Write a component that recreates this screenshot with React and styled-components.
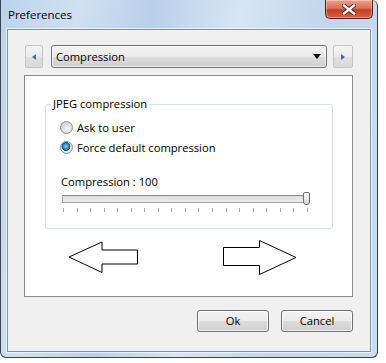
import React from "react";
import styled, { createGlobalStyle } from "styled-components";

const Global = createGlobalStyle`
  html, body { margin: 0; padding: 0; background: #ffffff; }
  body { font-family: "Open Sans", "Noto Sans", sans-serif; font-size: 11.2px; color: #000; }
  * { box-sizing: border-box; }
`;

const Window = styled.div`
  width: 378px;
  height: 358px;
  display: flex;
  flex-direction: column;
  border: 1px solid #3c4452;
  border-top: none;
  border-radius: 0 6px 6px 6px;
  background: linear-gradient(100deg, #bcd3eb 0%, #cfe0f2 18%, #b9d0e9 35%, #d6e5f5 55%, #c1d6ec 75%, #cadcef 100%);
  overflow: hidden;
`;

const TitleBar = styled.div`
  height: 29px;
  flex: none;
  display: flex;
  align-items: flex-start;
  justify-content: space-between;
  padding-left: 7px;
  padding-right: 4px;
`;

const Title = styled.div`
  margin-top: 7px;
  font-size: 11.5px;
  color: #000;
`;

const CloseButton = styled.div`
  width: 48px;
  height: 19px;
  display: flex;
  align-items: center;
  justify-content: center;
  border: 1px solid #5c1d14;
  border-top: none;
  border-radius: 0 0 5px 5px;
  background: linear-gradient(180deg, #eaa08c 0%, #d8725a 45%, #c63d24 55%, #d5633f 100%);
  box-shadow: inset 0 0 0 1px rgba(255,255,255,0.35);
`;

const Client = styled.div`
  flex: 1;
  margin: 0 6px 5px 6px;
  border: 1px solid #7f93ab;
  background: #f0f0f0;
  display: flex;
  flex-direction: column;
  padding: 15px 17px 18px 16px;
  box-shadow: 0 0 0 1px rgba(255,255,255,0.6);
`;

const NavRow = styled.div`
  display: flex;
  align-items: center;
  height: 23px;
  padding-left: 1px;
`;

const NavButton = styled.div`
  width: ${p => p.$w}px;
  height: 23px;
  display: flex;
  align-items: center;
  justify-content: center;
  border: 1px solid #c4c4c4;
  border-radius: 2px;
  background: linear-gradient(180deg, #f4f4f4 0%, #ebebeb 50%, #e0e0e0 51%, #d9d9d9 100%);
  margin-left: ${p => p.$ml || 0}px;
`;

const Combo = styled.div`
  width: 277px;
  height: 23px;
  margin-left: 8px;
  display: flex;
  align-items: center;
  justify-content: space-between;
  padding: 0 5px 0 4px;
  border: 1px solid #707070;
  border-radius: 3px;
  background: linear-gradient(180deg, #f2f2f2 0%, #ebebeb 50%, #dddddd 51%, #cfcfcf 100%);
  box-shadow: inset 0 0 0 1px rgba(255,255,255,0.7);
`;

const Panel = styled.div`
  margin-top: 7px;
  height: 222px;
  background: #ffffff;
  border: 1px solid #8c8c8c;
  display: flex;
  flex-direction: column;
  padding: 20px 19px 0 20px;
`;

const Group = styled.fieldset`
  margin: 0;
  border: 1px solid #d5dfe5;
  border-radius: 3px;
  padding: 5px 22px 16px 14px;
  display: flex;
  flex-direction: column;
`;

const Legend = styled.legend`
  margin-left: -9px;
  padding: 0 2px;
  line-height: 16px;
`;

const RadioRow = styled.label`
  display: flex;
  align-items: center;
  height: 18px;
  margin-top: ${p => p.$mt || 0}px;
  gap: 4px;
`;

const Radio = styled.input.attrs({ type: "radio" })`
  appearance: none;
  margin: 0;
  width: 13px;
  height: 13px;
  border-radius: 50%;
  border: 1px solid #8e8f8f;
  background: radial-gradient(circle at 60% 65%, #f4f4f4 0%, #d4d4d4 70%, #c6c6c6 100%);
  &:checked {
    background:
      radial-gradient(circle at 45% 40%, #8fd0f5 0%, #2a8bd0 30%, #0d4f8c 48%, transparent 52%),
      radial-gradient(circle, #f4f4f4 0%, #e0e0e0 100%);
  }
`;

const ValueLabel = styled.div`
  margin-top: 18px;
  line-height: 16px;
  padding-left: 1px;
`;

const Slider = styled.div`
  position: relative;
  margin-top: 5px;
  padding-left: 2px;
`;

const Track = styled.div`
  height: 8px;
  border: 1px solid #a6a6a6;
  border-top-color: #8a8a8a;
  background: linear-gradient(180deg, #dcdcdc 0%, #ececec 100%);
  border-radius: 1px;
`;

const Thumb = styled.div`
  position: absolute;
  right: 0;
  top: -3px;
  width: 7px;
  height: 13px;
  border: 1px solid #6f6f6f;
  border-radius: 2px 2px 3px 3px;
  background: linear-gradient(180deg, #fbfbfb 0%, #e6e6e6 60%, #d2d2d2 100%);
`;

const Ticks = styled.div`
  display: flex;
  justify-content: space-between;
  margin-top: 5px;
  padding: 0 2px 0 3px;
`;

const Tick = styled.span`
  width: 1px;
  height: 4px;
  background: #a8a8a8;
`;

const ArrowRow = styled.div`
  display: flex;
  align-items: flex-start;
  margin-top: 11px;
  padding-left: 23px;
  gap: 84px;
`;

const ButtonRow = styled.div`
  display: flex;
  justify-content: flex-end;
  gap: 12px;
  margin-top: 13px;
`;

const Button = styled.button`
  width: 72px;
  height: 22px;
  font-family: inherit;
  font-size: 11.2px;
  color: #000;
  border: 1px solid #707070;
  border-radius: 3px;
  background: linear-gradient(180deg, #f2f2f2 0%, #ebebeb 50%, #dddddd 51%, #cfcfcf 100%);
  box-shadow: inset 0 0 0 1px rgba(255,255,255,0.75);
  padding: 0;
  line-height: 18px;
`;

export default function App() {
  return (
    <>
      <Global />
      <Window>
        <TitleBar>
          <Title>Preferences</Title>
          <CloseButton>
            <svg width="14" height="11" viewBox="0 0 14 11">
              <path d="M2 1.5 L12 9.5 M12 1.5 L2 9.5" stroke="#3a1a14" strokeWidth="4" strokeLinecap="square" />
              <path d="M2 1.5 L12 9.5 M12 1.5 L2 9.5" stroke="#ffffff" strokeWidth="2.4" strokeLinecap="square" />
            </svg>
          </CloseButton>
        </TitleBar>
        <Client>
          <NavRow>
            <NavButton $w={18}>
              <svg width="4" height="6" viewBox="0 0 4 6"><path d="M4 0 L0 3 L4 6 Z" fill="#5a6b8c" /></svg>
            </NavButton>
            <Combo>
              <span>Compression</span>
              <svg width="8" height="5" viewBox="0 0 8 5"><path d="M0 0 H8 L4 5 Z" fill="#000" /></svg>
            </Combo>
            <NavButton $w={20} $ml={6}>
              <svg width="4" height="6" viewBox="0 0 4 6"><path d="M0 0 L4 3 L0 6 Z" fill="#4a63b0" /></svg>
            </NavButton>
          </NavRow>
          <Panel>
            <Group>
              <Legend>JPEG compression</Legend>
              <RadioRow $mt={1}>
                <Radio name="c" />
                <span>Ask to user</span>
              </RadioRow>
              <RadioRow $mt={2}>
                <Radio name="c" defaultChecked />
                <span>Force default compression</span>
              </RadioRow>
              <ValueLabel>Compression : 100</ValueLabel>
              <Slider>
                <Track />
                <Thumb />
              </Slider>
              <Ticks>
                {Array.from({ length: 19 }).map((_, i) => <Tick key={i} />)}
              </Ticks>
            </Group>
            <ArrowRow>
              <svg width="71" height="34" viewBox="0 0 71 34">
                <path d="M1 17 L34 2 L34 10 L69.5 10 L69.5 24 L34 24 L34 32.5 Z" fill="#fff" stroke="#000" strokeWidth="1" />
              </svg>
              <svg width="75" height="36" viewBox="0 0 75 36">
                <path d="M0.5 7.5 L36.5 7.5 L36.5 0.5 L73 17.5 L36.5 34.5 L36.5 25.5 L0.5 25.5 Z" fill="#fff" stroke="#000" strokeWidth="1" />
              </svg>
            </ArrowRow>
          </Panel>
          <ButtonRow>
            <Button>Ok</Button>
            <Button>Cancel</Button>
          </ButtonRow>
        </Client>
      </Window>
    </>
  );
}
